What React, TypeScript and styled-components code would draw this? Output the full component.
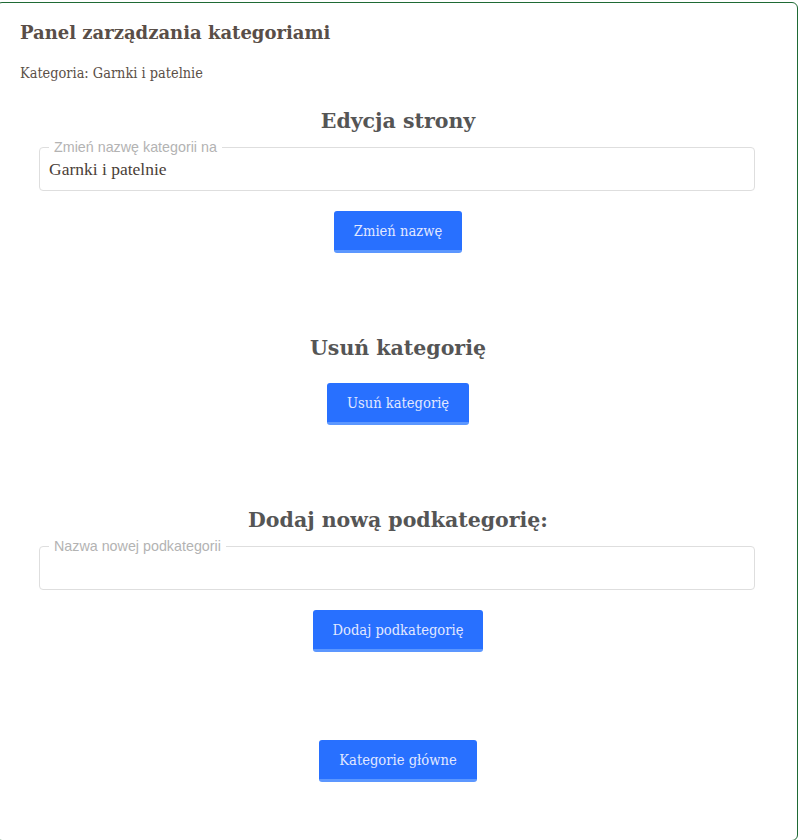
import React from "react";
import styled, { createGlobalStyle } from "styled-components";

const Global = createGlobalStyle`
  html, body { margin: 0; padding: 0; background: #fff; }
  body { font-family: "DejaVu Serif", serif; overflow: hidden; }
`;

const Card = styled.div`
  box-sizing: border-box;
  margin: 2px 0 0 -4px;
  width: 802px;
  height: 839px;
  border: 1px solid #1f6a35;
  border-radius: 6px;
  padding: 17px 0 0 23px;
  display: flex;
  flex-direction: column;
`;

const Title = styled.h2`
  margin: 0;
  font-family: "DejaVu Serif", serif;
  font-weight: bold;
  font-size: 18px;
  line-height: 26px;
  color: #594e48;
`;

const Sub = styled.p`
  margin: 18px 0 0;
  font-family: "DejaVu Serif Condensed", "DejaVu Serif", serif;
  font-size: 14.4px;
  line-height: 18px;
  color: #5b4f47;
`;

const Section = styled.section<{ $top: number }>`
  margin-top: ${(p) => p.$top}px;
  display: flex;
  flex-direction: column;
  align-items: center;
  width: 756px;
`;

const Heading = styled.h3`
  margin: 0;
  font-family: "DejaVu Serif", serif;
  font-weight: bold;
  font-size: 20.5px;
  line-height: 28px;
  color: #555;
`;

const Field = styled.fieldset`
  box-sizing: border-box;
  margin: 6px 21px 0 19px;
  align-self: stretch;
  height: 50px;
  border: 1px solid #dedede;
  border-radius: 4px;
  padding: 0 9px;
  min-width: 0;
`;

const Legend = styled.legend`
  padding: 0 5px;
  margin-left: 0;
  font-family: "Liberation Sans", Arial, sans-serif;
  font-size: 14.3px;
  line-height: 12px;
  color: #b3b3b3;
`;

const Input = styled.input`
  display: block;
  width: 100%;
  border: none;
  outline: none;
  padding: 0;
  margin-top: 5px;
  font-family: "Liberation Serif", serif;
  font-size: 17.5px;
  line-height: 22px;
  height: 22px;
  color: #4a4038;
  background: transparent;
`;

const Button = styled.button<{ $top: number }>`
  box-sizing: border-box;
  margin-top: ${(p) => p.$top}px;
  height: 42px;
  padding: 0 20px;
  border: none;
  border-bottom: 3px solid #5c97ff;
  border-radius: 3px;
  background: #2870ff;
  color: #e2e8ff;
  font-family: "DejaVu Serif Condensed", "DejaVu Serif", serif;
  font-size: 14.6px;
  line-height: 39px;
  cursor: pointer;
`;

export default function App() {
  return (
    <>
      <Global />
      <Card>
        <Title>Panel zarządzania kategoriami</Title>
        <Sub>Kategoria: Garnki i patelnie</Sub>
        <Section $top={25}>
          <Heading>Edycja strony</Heading>
          <Field>
            <Legend>Zmień nazwę kategorii na</Legend>
            <Input defaultValue="Garnki i patelnie" />
          </Field>
          <Button $top={20}>Zmień nazwę</Button>
        </Section>
        <Section $top={81}>
          <Heading>Usuń kategorię</Heading>
          <Button $top={21}>Usuń kategorię</Button>
        </Section>
        <Section $top={81}>
          <Heading>Dodaj nową podkategorię:</Heading>
          <Field>
            <Legend>Nazwa nowej podkategorii</Legend>
            <Input />
          </Field>
          <Button $top={20}>Dodaj podkategorię</Button>
        </Section>
        <Section $top={88}>
          <Button $top={0}>Kategorie główne</Button>
        </Section>
      </Card>
    </>
  );
}
